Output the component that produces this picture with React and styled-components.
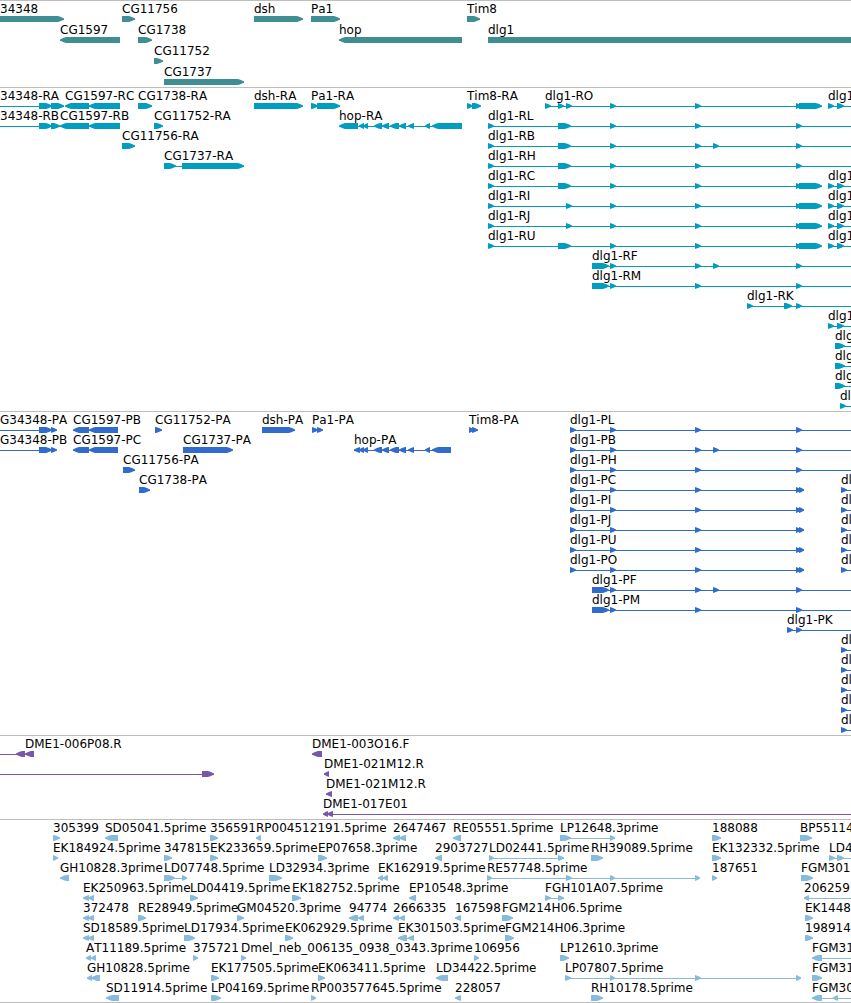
import React from 'react';
import styled, { createGlobalStyle } from 'styled-components';

const GlobalStyle = createGlobalStyle`
  body {
    margin: 0;
    background: white;
    color: black;
    font-family: 'DejaVu Sans', sans-serif;
    font-size: 12px;
    font-kerning: none;
  }
`;

const Browser = styled.main`
  display: flex;
  flex-direction: column;
  overflow: hidden;
  border-bottom: 1px solid #bebebe;
`;

const Track = styled.section`
  display: flex;
  flex-direction: column;
  border-top: 1px solid #bebebe;
  padding: 1px 0 ${props => props.$foot}px;
  color: ${props => props.$color};
`;

const Lane = styled.div`
  position: relative;
  height: ${props => props.$height}px;
`;

// features sit at their sequence position inside a lane
const StyledFeature = styled.div`
  position: absolute;
  top: 0;
  display: flex;
  flex-direction: column;
`;

const Label = styled.span`
  height: 14px;
  line-height: 14px;
  color: black;
  white-space: pre;
`;

const Glyph = styled.svg`
  display: block;
  width: 1px;
  height: 6px;
  overflow: visible;
  fill: currentColor;
`;

// well past the right edge, the browser clips it
const OUT = 4000;

const add = (name, at, exons, more = {}) => ({ name, at, exons, ...more });
const rev = (name, at, exons, more = {}) => ({ name, at, exons, reverse: true, ...more });
const on = { to: OUT };
const before = { from: -20 };

const hopExons = [[359, 364], [363, 368], [374, 382], [382, 389], [390, 399], [399, 406], [408, 414], [425, 430]];

const start = [488, 494];
const second = [558, 571];
const secondShort = [566, 572];
const third = [610, 616];
const fourth = [695, 701];
const extra = [713, 719];
const fifth = [796, 802];
const lastRna = [[796, 801], [799, 822]];
const lastProtein = [[796, 801], [799, 804]];

const dlg1Rna = add('dlg1', 828, [[828, 834], [837, 844]], on);
const dlg1Late = add('dlg1', 835, [[835, 845]], on);
const dlg1Protein = add('dlg1', 841, [[841, 847]], on);
const protein = (name, ...exons) => add(name, 570, [[570, 576], third, fourth, ...exons]);
const longProtein = (name, ...exons) => add(name, 570, [[570, 576], third, fourth, ...exons], on);

const tracks = [
  {
    name: 'Genes',
    color: '#3e8e94',
    height: 21,
    foot: 1,
    lanes: [
      [
        add('34348', 0, [[-20, 64]]),
        add('CG11756', 122, [[122, 135]]),
        add('dsh', 254, [[254, 303]]),
        add('Pa1', 311, [[311, 340]]),
        add('Tim8', 467, [[467, 480]]),
      ],
      [
        rev('CG1597', 60, [[60, 120]]),
        add('CG1738', 138, [[138, 152]]),
        rev('hop', 339, [[339, 462]]),
        add('dlg1', 488, [[488, OUT]]),
      ],
      [add('CG11752', 154, [[154, 163]])],
      [add('CG1737', 164, [[164, 244]])],
    ],
  },
  {
    name: 'Transcripts',
    color: '#009dc0',
    height: 20,
    foot: 2,
    lanes: [
      [
        add('34348-RA', 0, [[39, 52], [51, 64]], before),
        rev('CG1597-RC', 65, [[65, 89], [89, 120]]),
        add('CG1738-RA', 138, [[138, 152]]),
        add('dsh-RA', 254, [[254, 303]]),
        add('Pa1-RA', 311, [[311, 318], [317, 340]]),
        add('Tim8-RA', 467, [[467, 473], [472, 481]]),
        add('dlg1-RO', 545, [[545, 551], [558, 564], secondShort, third, fourth, ...lastRna]),
        dlg1Rna,
      ],
      [
        add('34348-RB', 0, [[39, 52], [51, 60]], before),
        rev('CG1597-RB', 60, [[60, 89], [89, 120]]),
        add('CG11752-RA', 154, [[154, 163]]),
        rev('hop-RA', 339, [[339, 358], ...hopExons, [432, 462]]),
        add('dlg1-RL', 488, [start, second, third, fourth, fifth], on),
      ],
      [
        add('CG11756-RA', 122, [[122, 135]]),
        add('dlg1-RB', 488, [start, second, third, fourth, extra, fifth], on),
      ],
      [
        add('CG1737-RA', 164, [[164, 176], [182, 244]]),
        add('dlg1-RH', 488, [start, second, third, fourth, fifth], on),
      ],
      [add('dlg1-RC', 488, [start, second, third, fourth, ...lastRna]), dlg1Rna],
      [add('dlg1-RI', 488, [start, secondShort, third, fourth, ...lastRna]), dlg1Rna],
      [add('dlg1-RJ', 488, [start, secondShort, third, fourth, ...lastRna]), dlg1Rna],
      [add('dlg1-RU', 488, [start, second, third, fourth, ...lastRna]), dlg1Rna],
      [add('dlg1-RF', 592, [[592, 609], third, fourth, extra, fifth], on)],
      [add('dlg1-RM', 592, [[592, 609], third, fourth, fifth], on)],
      [add('dlg1-RK', 747, [[747, 753], [784, 792], fifth], on)],
      [dlg1Rna],
      [dlg1Late],
      [dlg1Late],
      [dlg1Late],
      [add('dlg1', 840, [[840, 846]], on)],
    ],
  },
  {
    name: 'Proteins',
    color: '#316ccc',
    height: 20,
    foot: 2,
    lanes: [
      [
        add('G34348-PA', 0, [[39, 52], [51, 57]], before),
        rev('CG1597-PB', 73, [[73, 89], [89, 118]]),
        add('CG11752-PA', 155, [[155, 162]]),
        add('dsh-PA', 262, [[262, 295]]),
        add('Pa1-PA', 312, [[312, 318], [317, 323]]),
        add('Tim8-PA', 469, [[469, 474], [472, 478]]),
        longProtein('dlg1-PL', fifth),
      ],
      [
        add('G34348-PB', 0, [[39, 52], [51, 57]], before),
        rev('CG1597-PC', 73, [[73, 89], [89, 118]]),
        add('CG1737-PA', 183, [[183, 233]]),
        rev('hop-PA', 354, [[354, 360], ...hopExons, [432, 451]]),
        longProtein('dlg1-PB', extra, fifth),
      ],
      [add('CG11756-PA', 123, [[123, 135]]), longProtein('dlg1-PH', fifth)],
      [add('CG1738-PA', 139, [[139, 150]]), protein('dlg1-PC', ...lastProtein), dlg1Protein],
      [protein('dlg1-PI', ...lastProtein), dlg1Protein],
      [protein('dlg1-PJ', ...lastProtein), dlg1Protein],
      [protein('dlg1-PU', ...lastProtein), dlg1Protein],
      [protein('dlg1-PO', ...lastProtein), dlg1Protein],
      [add('dlg1-PF', 592, [[592, 609], third, fourth, extra, fifth], on)],
      [add('dlg1-PM', 592, [[592, 609], third, fourth, fifth], on)],
      [add('dlg1-PK', 787, [[787, 793], fifth], on)],
      [dlg1Protein],
      [dlg1Protein],
      [dlg1Protein],
      [dlg1Protein],
      [dlg1Protein],
    ],
  },
  {
    name: 'BAC ends',
    color: '#7758a6',
    height: 20,
    foot: 2,
    lanes: [
      [
        rev('DME1-006P08.R', 25, [[16, 25], [25, 34]], before),
        rev('DME1-003O16.F', 312, [[312, 322]]),
      ],
      [
        add('', 0, [[202, 214]], before),
        rev('DME1-021M12.R', 324, [[324, 329]]),
      ],
      [rev('DME1-021M12.R', 326, [[326, 332]])],
      [rev('DME1-017E01', 323, [[323, 328], [327, 333]], on)],
    ],
  },
  {
    name: 'ESTs',
    color: '#87bbdc',
    height: 20,
    foot: 1,
    lanes: [
      [
        add('305399', 53, [[53, 60]]),
        rev('SD05041.5prime', 105, [[105, 118]]),
        add('356591', 210, [[210, 218]]),
        rev('RP004512191.5prime', 256, [[256, 261]]),
        rev('2647467', 393, [[393, 400], [399, 406]]),
        rev('RE05551.5prime', 453, [[453, 461]]),
        add('LP12648.3prime', 560, [[560, 571], [610, 615]]),
        add('188088', 712, [[712, 721]]),
        add('BP55114', 800, [[800, 812]]),
      ],
      [
        add('EK184924.5prime', 53, [[53, 58]]),
        add('347815', 164, [[164, 172]]),
        add('EK233659.5prime', 210, [[210, 218]]),
        add('EP07658.3prime', 318, [[318, 327]]),
        rev('2903727', 435, [[435, 442]]),
        add('LD02441.5prime', 489, [[489, 494], [558, 564]]),
        add('RH39089.5prime', 591, [[591, 603]]),
        add('EK132332.5prime', 712, [[712, 721]]),
        add('LD4', 829, [[829, 835], [837, 844]], on),
      ],
      [
        rev('GH10828.3prime', 60, [[60, 69]]),
        add('LD07748.5prime', 164, [[164, 175], [182, 187]]),
        add('LD32934.3prime', 269, [[269, 282]]),
        rev('EK162919.5prime', 378, [[378, 383], [383, 388]]),
        add('RE57748.5prime', 487, [[487, 492], secondShort, [610, 615], [695, 700]]),
        add('187651', 712, [[712, 717]]),
        add('FGM301', 801, [[801, 813]]),
      ],
      [
        rev('EK250963.5prime', 83, [[83, 89], [88, 94]]),
        add('LD04419.5prime', 190, [[190, 198]]),
        add('EK182752.5prime', 292, [[292, 301]]),
        rev('EP10548.3prime', 409, [[409, 416]]),
        add('FGH101A07.5prime', 545, [[545, 551], [558, 564]]),
        rev('206259', 804, [[804, 809]], on),
      ],
      [
        rev('372478', 83, [[83, 89], [88, 94]]),
        add('RE28949.5prime', 138, [[138, 146]]),
        add('GM04520.3prime', 237, [[237, 244]]),
        rev('94774', 349, [[349, 358], [358, 364]]),
        rev('2666335', 393, [[393, 399], [399, 405]]),
        rev('167598', 455, [[455, 461]]),
        add('FGM214H06.5prime', 502, [[502, 513]]),
        add('EK1448', 805, [[805, 813]]),
      ],
      [
        rev('SD18589.5prime', 83, [[83, 89], [88, 94]]),
        add('LD17934.5prime', 184, [[184, 195]]),
        add('EK062929.5prime', 285, [[285, 293]]),
        rev('EK301503.5prime', 398, [[398, 407], [408, 414]]),
        add('FGM214H06.3prime', 505, [[505, 514]]),
        add('198914', 805, [[805, 813]]),
      ],
      [
        rev('AT11189.5prime', 86, [[86, 91], [91, 96]]),
        add('375721', 193, [[193, 198]]),
        add('Dmel_neb_006135_0938_0343.3prime', 241, [[241, 246]]),
        add('106956', 474, [[474, 479]]),
        add('LP12610.3prime', 560, [[560, 569]]),
        rev('FGM31', 812, [[812, 822]], on),
      ],
      [
        rev('GH10828.5prime', 87, [[87, 92], [91, 100]]),
        add('EK177505.5prime', 211, [[211, 219]]),
        add('EK063411.5prime', 318, [[318, 325]]),
        rev('LD34422.5prime', 436, [[436, 448]]),
        add('LP07807.5prime', 565, [[565, 571], [610, 615], [695, 701], [796, 801]]),
        add('FGM31', 812, [[812, 822]]),
      ],
      [
        rev('SD11914.5prime', 106, [[106, 119]]),
        add('LP04169.5prime', 211, [[211, 221]]),
        add('RP003577645.5prime', 311, [[311, 316]]),
        rev('228057', 455, [[455, 461]]),
        add('RH10178.5prime', 591, [[591, 603]]),
        rev('FGM30', 812, [[812, 822], [833, 838]], on),
      ],
    ],
  },
];

// a bar with an arrow head, short exons are all head
const exonPath = (start, end, reverse) => {
  const head = Math.min(6, end - start);
  const tip = reverse ? start : end;
  const tail = reverse ? end : start;
  const side = reverse ? 1 : -1;
  const neck = tip + side * head;
  const cheek = tip + side * head * 0.5;
  return `M${tail} 0H${neck}L${cheek} 1L${tip} 2.5V3.5L${cheek} 5L${neck} 6H${tail}Z`;
};

const Feature = ({ name, at, exons, reverse, from, to }) => {
  const first = (from ?? Math.min(at, exons[0][0])) - at;
  const last = (to ?? exons[exons.length - 1][1]) - at;
  return (
    <StyledFeature style={{ left: at }}>
      <Label>{name}</Label>
      <Glyph aria-hidden="true">
        <rect x={first} y="3" width={last - first} height="1" />
        {exons.map(([start, end]) => (
          <path key={start} d={exonPath(start - at, end - at, reverse)} />
        ))}
      </Glyph>
    </StyledFeature>
  );
};

const App = () => (
  <>
    <GlobalStyle />
    <Browser>
      {tracks.map(track => (
        <Track key={track.name} aria-label={track.name} $color={track.color} $foot={track.foot}>
          {track.lanes.map((lane, i) => (
            <Lane key={i} $height={track.height}>
              {lane.map(feature => <Feature key={feature.name + feature.at} {...feature} />)}
            </Lane>
          ))}
        </Track>
      ))}
    </Browser>
  </>
);

export default App;
